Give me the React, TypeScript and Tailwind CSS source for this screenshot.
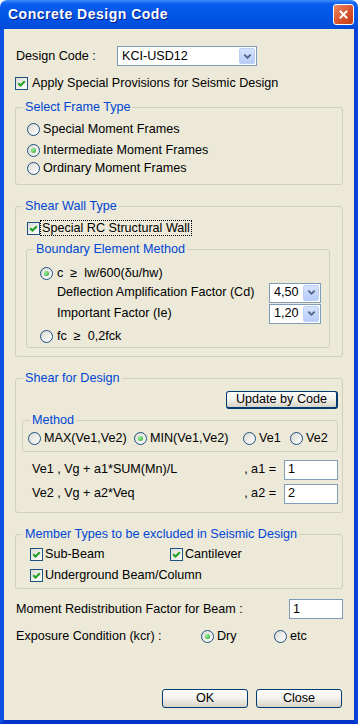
import React from 'react';

const CheckBox: React.FC = () => (
  <span className="relative w-[13px] h-[13px] shrink-0 border border-[#1C5180] bg-linear-to-br from-[#DCDBD5] to-white">
    <svg viewBox="0 0 11 11" className="absolute inset-0 w-[11px] h-[11px]">
      <path d="M2.2 5.2 L4.5 7.5 L8.8 3.2" stroke="#21A121" strokeWidth="2" fill="none" />
    </svg>
  </span>
);

const Radio: React.FC<{ checked?: boolean }> = ({ checked }) => (
  <span className="flex items-center justify-center w-[13px] h-[13px] shrink-0 rounded-full border border-[#1C5180] bg-linear-to-br from-[#DCDBD5] to-white">
    {checked && (
      <span className="w-[5px] h-[5px] rounded-full bg-[radial-gradient(circle_at_35%_35%,#9CF29C,#21A121)]" />
    )}
  </span>
);

const Combo: React.FC<{ value: string; className: string }> = ({ value, className }) => (
  <div className={`flex items-stretch border border-[#7F9DB9] bg-white p-[1px] ${className}`}>
    <span className="flex-1 pl-[3px] flex items-center">{value}</span>
    <span className="w-[16px] flex items-center justify-center rounded-[2px] bg-linear-to-b from-[#D6E3FD] to-[#B7CCF8] border border-[#BCCFF5]">
      <svg viewBox="0 0 10 10" className="w-[9px] h-[9px]">
        <path d="M1.5 3 L5 6.5 L8.5 3" stroke="#4D6185" strokeWidth="2" fill="none" />
      </svg>
    </span>
  </div>
);

const TextBox: React.FC<{ value: string }> = ({ value }) => (
  <div className="w-[54px] h-[20px] border border-[#7F9DB9] bg-white pl-[3px] flex items-center">{value}</div>
);

const XPButton: React.FC<{ children: React.ReactNode; className: string }> = ({ children, className }) => (
  <button className={`rounded-[3px] border border-[#003C74] bg-linear-to-b from-white via-[#F2F1EC] to-[#D8D2C6] text-black leading-none ${className}`}>
    {children}
  </button>
);

const Group: React.FC<{ title: string; className?: string; children: React.ReactNode }> = ({ title, className = '', children }) => (
  <fieldset className={`border border-[#D0D0BF] rounded-[3px] ${className}`}>
    <legend className="ml-[7px] px-[2px] leading-[14px] text-[#0046D5]">{title}</legend>
    {children}
  </fieldset>
);

const App: React.FC = () => {
  return (
    <div className="w-[358px] h-[724px] flex flex-col bg-white font-['Liberation_Sans',Arial,sans-serif] text-[12.6px] text-black">
      {/* title bar */}
      <div className="h-[29px] shrink-0 rounded-t-[7px] bg-[linear-gradient(to_bottom,#3D8FFB_0%,#0A5CEE_14%,#0055E5_60%,#004AD9_100%)] flex items-center justify-between pl-[8px] pr-[4px]">
        <span className="text-white font-bold text-[14px] tracking-[0.5px] [text-shadow:1px_1px_0_#0A1E8C]">
          Concrete Design Code
        </span>
        <span className="w-[21px] h-[21px] rounded-[3px] border border-white bg-linear-to-br from-[#E98A68] via-[#DB5530] to-[#C23D17] flex items-center justify-center">
          <svg viewBox="0 0 12 12" className="w-[11px] h-[11px]">
            <path d="M2 2 L10 10 M10 2 L2 10" stroke="white" strokeWidth="2.2" />
          </svg>
        </span>
      </div>

      {/* client */}
      <div className="flex-1 flex flex-col bg-[#ECE9D8] border-l-[4px] border-r-[4px] border-b-[4px] border-l-[#0B4FE2] border-r-[#0842D6] border-b-[#0534C8]">
        <div className="mt-[17px] h-[20px] flex items-center pl-[12px]">
          <span className="w-[101px]">Design Code :</span>
          <Combo value="KCI-USD12" className="w-[140px] h-[20px]" />
        </div>

        <div className="mt-[10px] h-[14px] flex items-center pl-[11px] gap-[4px]">
          <CheckBox />
          <span>Apply Special Provisions for Seismic Design</span>
        </div>

        <Group title="Select Frame Type" className="mt-[10px] mx-[11px]">
          <div className="pt-[6px] pb-[7px] pl-[11px]">
            <div className="h-[18px] flex items-center gap-[3px]">
              <Radio />
              <span>Special Moment Frames</span>
            </div>
            <div className="mt-[3px] h-[18px] flex items-center gap-[3px]">
              <Radio checked />
              <span>Intermediate Moment Frames</span>
            </div>
            <div className="h-[18px] flex items-center gap-[3px]">
              <Radio />
              <span>Ordinary Moment Frames</span>
            </div>
          </div>
        </Group>

        <Group title="Shear Wall Type" className="mt-[14px] mx-[11px]">
          <div className="pt-[8px] pb-[8px] pl-[10px] pr-[12px]">
            <div className="h-[14px] flex items-center pl-[1px]">
              <CheckBox />
              <span className="border border-dotted border-black pl-[1px] pr-[1px] leading-[14px]">Special RC Structural Wall</span>
            </div>
            <Group title="Boundary Element Method" className="mt-[7px]">
              <div className="pt-[8px] pb-[2px] pl-[13px] pr-[8px]">
                <div className="h-[18px] flex items-center gap-[4px]">
                  <Radio checked />
                  <span className="whitespace-pre">c  ≥  lw/600(δu/hw)</span>
                </div>
                <div className="h-[21px] flex items-center justify-between pl-[17px]">
                  <span>Deflection Amplification Factor (Cd)</span>
                  <Combo value="4,50" className="w-[52px] h-[20px]" />
                </div>
                <div className="h-[21px] flex items-center justify-between pl-[17px]">
                  <span>Important Factor (Ie)</span>
                  <Combo value="1,20" className="w-[52px] h-[20px]" />
                </div>
                <div className="mt-[3px] h-[18px] flex items-center gap-[4px]">
                  <Radio />
                  <span className="whitespace-pre">fc  ≥  0,2fck</span>
                </div>
              </div>
            </Group>
          </div>
        </Group>

        <Group title="Shear for Design" className="mt-[14px] mx-[11px]">
          <div className="pt-[6px] pb-[8px] pl-[6px] pr-[4px]">
            <div className="flex justify-end">
              <XPButton className="w-[112px] h-[18px] border-b-2 border-r-2">Update by Code</XPButton>
            </div>
            <Group title="Method" className="mt-[4px]">
              <div className="pt-[2px] pb-[4px] pl-[5px] h-[24px] flex items-center">
                <div className="w-[106px] flex items-center gap-[3px]">
                  <Radio />
                  <span>MAX(Ve1,Ve2)</span>
                </div>
                <div className="w-[109px] flex items-center gap-[3px]">
                  <Radio checked />
                  <span>MIN(Ve1,Ve2)</span>
                </div>
                <div className="w-[47px] flex items-center gap-[3px]">
                  <Radio />
                  <span>Ve1</span>
                </div>
                <div className="flex items-center gap-[3px]">
                  <Radio />
                  <span>Ve2</span>
                </div>
              </div>
            </Group>
            <div className="mt-[7px] h-[21px] flex items-center justify-between pl-[10px]">
              <span>Ve1 , Vg + a1*SUM(Mn)/L</span>
              <div className="flex items-center gap-[8px]">
                <span>, a1 =</span>
                <TextBox value="1" />
              </div>
            </div>
            <div className="mt-[3px] h-[21px] flex items-center justify-between pl-[10px]">
              <span>Ve2 , Vg + a2*Veq</span>
              <div className="flex items-center gap-[8px]">
                <span>, a2 =</span>
                <TextBox value="2" />
              </div>
            </div>
          </div>
        </Group>

        <Group title="Member Types to be excluded in Seismic Design" className="mt-[14px] mx-[11px]">
          <div className="pt-[6px] pb-[6px] pl-[14px]">
            <div className="h-[14px] flex items-center">
              <div className="w-[140px] flex items-center gap-[2px]">
                <CheckBox />
                <span>Sub-Beam</span>
              </div>
              <div className="flex items-center gap-[2px]">
                <CheckBox />
                <span>Cantilever</span>
              </div>
            </div>
            <div className="mt-[7px] h-[14px] flex items-center gap-[2px]">
              <CheckBox />
              <span>Underground Beam/Column</span>
            </div>
          </div>
        </Group>

        <div className="mt-[10px] h-[20px] flex items-center justify-between pl-[12px] pr-[11px]">
          <span>Moment Redistribution Factor for Beam :</span>
          <TextBox value="1" />
        </div>

        <div className="mt-[8px] h-[18px] flex items-center pl-[12px]">
          <span className="w-[185px]">Exposure Condition (kcr) :</span>
          <div className="w-[73px] flex items-center gap-[3px]">
            <Radio checked />
            <span>Dry</span>
          </div>
          <div className="flex items-center gap-[3px]">
            <Radio />
            <span>etc</span>
          </div>
        </div>

        <div className="mt-[44px] flex justify-end gap-[8px] pr-[12px]">
          <XPButton className="w-[86px] h-[19px]">OK</XPButton>
          <XPButton className="w-[86px] h-[19px]">Close</XPButton>
        </div>
      </div>
    </div>
  );
};

export default App;
